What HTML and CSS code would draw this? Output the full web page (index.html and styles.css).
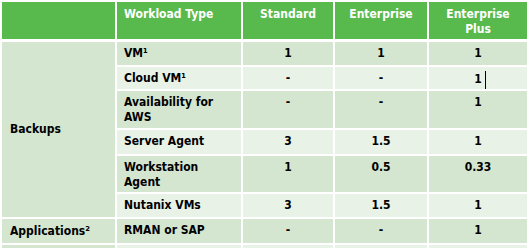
FILE: index.html
```html
<!DOCTYPE html>
<html>
<head>
<meta charset="utf-8">
<link rel="stylesheet" href="styles.css">
</head>
<body>
<table class="lic">
  <colgroup>
    <col class="c1"><col class="c2"><col class="c3"><col class="c4"><col class="c5">
  </colgroup>
  <thead>
    <tr>
      <th></th>
      <th class="left">Workload Type</th>
      <th>Standard</th>
      <th>Enterprise</th>
      <th>Enterprise<br>Plus</th>
    </tr>
  </thead>
  <tbody>
    <tr class="dark h23">
      <td class="cat" rowspan="6">Backups</td>
      <td class="type">VM¹</td>
      <td>1</td><td>1</td><td>1</td>
    </tr>
    <tr class="light h22">
      <td class="type">Cloud VM¹</td>
      <td>-</td><td>-</td><td>1<span class="caret"></span></td>
    </tr>
    <tr class="dark h37">
      <td class="type">Availability for<br>AWS</td>
      <td>-</td><td>-</td><td>1</td>
    </tr>
    <tr class="light h24">
      <td class="type">Server Agent</td>
      <td>3</td><td>1.5</td><td>1</td>
    </tr>
    <tr class="dark h36">
      <td class="type">Workstation<br>Agent</td>
      <td>1</td><td>0.5</td><td>0.33</td>
    </tr>
    <tr class="light h23">
      <td class="type">Nutanix VMs</td>
      <td>3</td><td>1.5</td><td>1</td>
    </tr>
    <tr class="dark h24">
      <td class="cat">Applications²</td>
      <td class="type">RMAN or SAP</td>
      <td>-</td><td>-</td><td>1</td>
    </tr>
    <tr class="light h24">
      <td class="cat">&nbsp;</td>
      <td class="type">&nbsp;</td>
      <td>&nbsp;</td><td>&nbsp;</td><td>&nbsp;</td>
    </tr>
  </tbody>
</table>
</body>
</html>
```

FILE: styles.css
```css
html, body {
  margin: 0;
  padding: 0;
  background: #ffffff;
  overflow: hidden;
  height: 248px;
}

.lic {
  width: 529px;
  table-layout: fixed;
  border-collapse: separate;
  border-spacing: 2px;
  font-family: "DejaVu Sans Condensed", "DejaVu Sans", Tahoma, sans-serif;
  font-weight: bold;
  font-size: 12px;
  line-height: 14.5px;
  color: #000000;
}

.c1 { width: 113px; }
.c2 { width: 124px; }
.c3 { width: 90px; }
.c4 { width: 92px; }
.c5 { width: 98px; }

.lic th {
  background: #58b94d;
  color: #ffffff;
  text-align: center;
  vertical-align: top;
  padding: 5px 7px 0;
  height: 32px;
  border-bottom: 1px solid #ffffff;
}

.lic th.left {
  text-align: left;
}

.lic td {
  text-align: center;
  vertical-align: top;
  padding: 4px 7px 0;
}

.h22 td { height: 18px; }
.h23 td { height: 19px; }
.h24 td { height: 20px; }
.h36 td { height: 32px; }
.h37 td { height: 33px; }

.lic td.type {
  text-align: left;
}

.lic td.cat {
  text-align: left;
  vertical-align: middle;
  padding: 0 7px 0 8px;
  height: auto;
  background: #d4e6d0;
}

.dark td { background: #d4e6d0; }
.light td { background: #e9f2e7; }

.caret {
  display: inline-block;
  width: 1px;
  height: 18px;
  background: #000000;
  margin-left: 3px;
  margin-right: -4px;
  vertical-align: -6px;
}
```
